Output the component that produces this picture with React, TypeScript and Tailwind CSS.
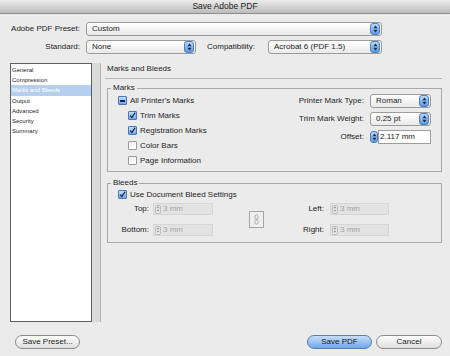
import React from 'react';

function Arrows({ color = '#1b2f55' }: { color?: string }) {
  return (
    <svg width="5" height="8" viewBox="0 0 5 8">
      <path d="M2.5 0.6L4.6 3.2H0.4Z M2.5 7.4L4.6 4.8H0.4Z" fill={color} />
    </svg>
  );
}

function BlueStepper({ w = 'w-[10px]' }: { w?: string }) {
  return (
    <span className={`flex h-[12px] ${w} items-center justify-center rounded-[3px] border border-[#4f7fc0] bg-linear-to-b from-[#b9d5f6] to-[#5b9ae2]`}>
      <Arrows />
    </span>
  );
}

function Select({ text, width }: { text: string; width: string }) {
  return (
    <div className={`flex h-[14px] ${width} items-center justify-between rounded-[3px] border border-[#9b9b9b] bg-linear-to-b from-white to-[#e9e9e9] pl-[5px] pr-[1px]`}>
      <span className="leading-none">{text}</span>
      <BlueStepper />
    </div>
  );
}

function Check({ state }: { state: 'on' | 'off' | 'mixed' }) {
  if (state === 'off') {
    return <span className="h-[9px] w-[9px] shrink-0 rounded-[1px] border border-[#9a9a9a] bg-linear-to-b from-[#f2f2f2] to-white" />;
  }
  return (
    <span className="flex h-[9px] w-[9px] shrink-0 items-center justify-center rounded-[1px] border border-[#4a78b8] bg-linear-to-b from-[#c3dcf8] to-[#6ea6e6]">
      {state === 'on' ? (
        <svg width="9" height="9" viewBox="0 0 9 9" className="-mt-[1px]">
          <path d="M1.6 4.6L3.6 7L8 0.8" stroke="#16284d" strokeWidth="1.5" fill="none" />
        </svg>
      ) : (
        <span className="h-[2px] w-[5px] bg-[#16284d]" />
      )}
    </span>
  );
}

function CheckRow({ state, label, indent }: { state: 'on' | 'off' | 'mixed'; label: string; indent: string }) {
  return (
    <div className={`flex h-[15px] items-center gap-[3px] ${indent}`}>
      <Check state={state} />
      <span>{label}</span>
    </div>
  );
}

function DisabledInput({ width }: { width: string }) {
  return (
    <div className={`flex h-[12px] ${width} items-center border border-[#d6d6d6] bg-[#e3e3e3] pl-[1px]`}>
      <span className="flex h-[9px] w-[6px] items-center justify-center rounded-[2px] border border-[#bdbdbd] bg-[#ececec]">
        <Arrows color="#9a9a9a" />
      </span>
      <span className="ml-[2px] leading-none text-[#a3a3a3]">3 mm</span>
    </div>
  );
}

const items = ['General', 'Compression', 'Marks and Bleeds', 'Output', 'Advanced', 'Security', 'Summary'];

export default function App() {
  return (
    <div className="flex h-[356px] w-[450px] flex-col overflow-hidden bg-[#ebebeb] font-['Liberation_Sans',Arial,sans-serif] text-[8px] text-[#1c1c1c]">
      {/* title bar */}
      <div className="h-[14px] shrink-0 border-b border-[#8e8e8e] bg-linear-to-b from-[#ececec] to-[#bcbcbc] text-center text-[8.5px] leading-[13px] text-[#222]">
        Save Adobe PDF
      </div>

      {/* preset rows */}
      <div className="mt-[8px] flex flex-col gap-[4px] pl-[10px]">
        <div className="flex items-center gap-[6px]">
          <span className="w-[70px] text-right">Adobe PDF Preset:</span>
          <Select text="Custom" width="w-[296px]" />
        </div>
        <div className="flex items-center">
          <span className="w-[70px] text-right">Standard:</span>
          <div className="ml-[6px]">
            <Select text="None" width="w-[110px]" />
          </div>
          <span className="ml-[11px] w-[55px]">Compatibility:</span>
          <div className="ml-[6px]">
            <Select text="Acrobat 6 (PDF 1.5)" width="w-[114px]" />
          </div>
        </div>
      </div>

      {/* main */}
      <div className="mt-[9px] flex h-[259px] shrink-0 pl-[10px]">
        <div className="w-[82px] border border-[#5f5f5f] bg-white pt-[1px] text-[6px]">
          {items.map((it) => (
            <div
              key={it}
              className={`h-[10.2px] pl-[1px] leading-[10px] ${it === 'Marks and Bleeds' ? 'bg-[#b7cfef] text-white' : ''}`}
            >
              {it}
            </div>
          ))}
        </div>
        <div className="w-[9px] border-r border-[#b3b3b3] bg-[#dadada]" />

        <div className="ml-[6px] w-[335px]">
          <div className="pt-[1px] leading-[10px]">Marks and Bleeds</div>
          <div className="-ml-[2px] mt-[4px] border-t border-[#b8b8b8]" />

          {/* Marks */}
          <fieldset className="mt-[4px] border border-[#a9a9a9] pb-[3px]">
            <legend className="ml-[3px] px-[2px] leading-[10px]">Marks</legend>
            <div className="flex justify-between">
              <div className="flex flex-col">
                <CheckRow state="mixed" label="All Printer's Marks" indent="pl-[10px]" />
                <CheckRow state="on" label="Trim Marks" indent="pl-[20px]" />
                <CheckRow state="on" label="Registration Marks" indent="pl-[20px]" />
                <CheckRow state="off" label="Color Bars" indent="pl-[20px]" />
                <CheckRow state="off" label="Page Information" indent="pl-[20px]" />
              </div>
              <div className="grid grid-cols-[auto_61px] content-start items-center gap-x-[6px] gap-y-[4px] pr-[10px] pt-[1px]">
                <span className="text-right">Printer Mark Type:</span>
                <Select text="Roman" width="w-[61px]" />
                <span className="text-right">Trim Mark Weight:</span>
                <Select text="0.25 pt" width="w-[61px]" />
                <span className="text-right">Offset:</span>
                <div className="flex h-[14px] items-center">
                  <BlueStepper w="w-[8px]" />
                  <div className="flex h-[14px] flex-1 items-center border border-[#9d9d9d] bg-white pl-[1px] leading-none">
                    2.117 mm
                  </div>
                </div>
              </div>
            </div>
          </fieldset>

          {/* Bleeds */}
          <fieldset className="mt-[6px] border border-[#a9a9a9] pb-[6px]">
            <legend className="ml-[3px] px-[2px] leading-[10px]">Bleeds</legend>
            <div className="flex h-[13px] items-center gap-[3px] pl-[10px]">
              <Check state="on" />
              <span>Use Document Bleed Settings</span>
            </div>
            <div className="mt-[2px] flex items-center pl-[8px]">
              <div className="flex flex-col gap-[9px]">
                <div className="flex items-center gap-[4px]">
                  <span className="w-[33px] text-right">Top:</span>
                  <DisabledInput width="w-[60px]" />
                </div>
                <div className="flex items-center gap-[4px]">
                  <span className="w-[33px] text-right">Bottom:</span>
                  <DisabledInput width="w-[60px]" />
                </div>
              </div>
              <div className="ml-[36px] flex h-[17px] w-[15px] items-center justify-center border border-[#a5a5a5] bg-[#efefef]">
                <svg width="5" height="11" viewBox="0 0 5 11">
                  <rect x="1" y="0.8" width="3" height="4.4" rx="1.5" fill="none" stroke="#a0a0a0" strokeWidth="0.9" />
                  <rect x="1" y="5.8" width="3" height="4.4" rx="1.5" fill="none" stroke="#a0a0a0" strokeWidth="0.9" />
                </svg>
              </div>
              <div className="ml-[10px] flex flex-col gap-[9px]">
                <div className="flex items-center gap-[6px]">
                  <span className="w-[50px] text-right">Left:</span>
                  <DisabledInput width="w-[59px]" />
                </div>
                <div className="flex items-center gap-[6px]">
                  <span className="w-[50px] text-right">Right:</span>
                  <DisabledInput width="w-[59px]" />
                </div>
              </div>
            </div>
          </fieldset>
        </div>
      </div>

      {/* buttons */}
      <div className="mt-[13px] flex items-center pl-[15px] pr-[8px]">
        <button className="h-[14px] w-[65px] rounded-full border border-[#8c8c8c] bg-linear-to-b from-white to-[#dedede] leading-none">
          Save Preset...
        </button>
        <div className="flex-1" />
        <button className="h-[14px] w-[65px] rounded-full border border-[#5a7fb6] bg-linear-to-b from-[#c6def9] to-[#6ea7e8] leading-none">
          Save PDF
        </button>
        <button className="ml-[4px] h-[14px] w-[66px] rounded-full border border-[#8c8c8c] bg-linear-to-b from-white to-[#dedede] leading-none">
          Cancel
        </button>
      </div>
    </div>
  );
}
